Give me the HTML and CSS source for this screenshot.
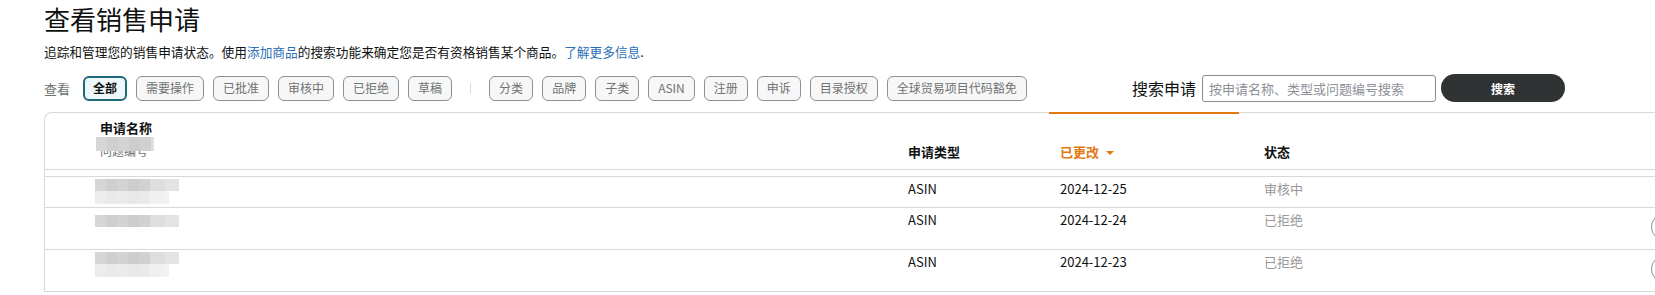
FILE: index.html
```html
<!DOCTYPE html>
<html lang="zh-CN">
<head>
  <meta charset="UTF-8" />
  <meta name="viewport" content="width=device-width, initial-scale=1.0"/>
  <title>查看销售申请</title>
  <link rel="stylesheet" href="styles.css">
</head>
<body>

  <div class="page">
    <h1 class="page-title">查看销售申请</h1>
    <p class="intro">追踪和管理您的销售申请状态。使用<a href="#">添加商品</a>的搜索功能来确定您是否有资格销售某个商品。<a href="#">了解更多信息</a>.</p>

    <div class="toolbar">
      <div class="filters">
        <span class="filter-label">查看</span>
        <button class="chip active">全部</button>
        <button class="chip">需要操作</button>
        <button class="chip">已批准</button>
        <button class="chip">审核中</button>
        <button class="chip">已拒绝</button>
        <button class="chip">草稿</button>
        <span class="divider"></span>
        <button class="chip">分类</button>
        <button class="chip">品牌</button>
        <button class="chip">子类</button>
        <button class="chip">ASIN</button>
        <button class="chip">注册</button>
        <button class="chip">申诉</button>
        <button class="chip">目录授权</button>
        <button class="chip">全球贸易项目代码豁免</button>
      </div>

      <form class="search">
        <label for="q">搜索申请</label>
        <input type="text" id="q" placeholder="按申请名称、类型或问题编号搜索">
        <button type="submit" class="search-btn">搜索</button>
      </form>
    </div>

    <div class="card">
      <table class="requests">
        <colgroup>
          <col class="w-name">
          <col class="w-type">
          <col class="w-date">
          <col class="w-status">
          <col class="w-action">
        </colgroup>
        <thead>
          <tr>
            <th class="col-name">
              <div class="th-title">申请名称</div>
              <div class="th-sub">问题编号<span class="blur blur-head"></span></div>
            </th>
            <th>申请类型</th>
            <th class="sorted">已更改<span class="caret"></span></th>
            <th class="col-status">状态</th>
            <th></th>
          </tr>
          <tr class="spacer"><td colspan="5"></td></tr>
        </thead>
        <tbody>
          <tr>
            <td class="col-name"><div class="blur blur-dark"></div><div class="blur blur-light"></div></td>
            <td>ASIN</td>
            <td>2024-12-25</td>
            <td class="col-status status">审核中</td>
            <td class="col-action"></td>
          </tr>
          <tr>
            <td class="col-name"><div class="blur blur-dark shift"></div></td>
            <td>ASIN</td>
            <td>2024-12-24</td>
            <td class="col-status status">已拒绝</td>
            <td class="col-action"><button class="row-btn" aria-label="操作"></button></td>
          </tr>
          <tr>
            <td class="col-name"><div class="blur blur-dark"></div><div class="blur blur-light"></div></td>
            <td>ASIN</td>
            <td>2024-12-23</td>
            <td class="col-status status">已拒绝</td>
            <td class="col-action"><button class="row-btn" aria-label="操作"></button></td>
          </tr>
        </tbody>
      </table>
    </div>
  </div>

</body>
</html>
```

FILE: styles.css
```css
body {
  margin: 0;
  padding: 0;
  font-family: 'Noto Sans CJK SC', 'Noto Sans', sans-serif;
  color: #0f1111;
  background: white;
  overflow: hidden;
}

.page {
  padding-left: 44px;
}

.page-title {
  margin: 0;
  font-size: 26px;
  font-weight: 400;
  line-height: 38px;
}

.intro {
  margin: 4px 0 0;
  font-size: 12.7px;
  line-height: 20px;
}

.intro a {
  color: #2b6fb6;
  text-decoration: none;
}

.toolbar {
  display: flex;
  align-items: center;
  margin-top: 12px;
  padding-right: 90px;
  height: 28px;
}

.filters {
  display: flex;
  align-items: center;
  gap: 9px;
}

.filter-label {
  font-size: 13px;
  color: #6f7373;
  margin-right: 4px;
}

.chip {
  height: 25px;
  padding: 0 9px;
  border: 1px solid #8d9096;
  border-radius: 6px;
  background: #f7f7f7;
  color: #6f7373;
  font-family: inherit;
  font-size: 12px;
  line-height: 1;
  cursor: pointer;
  white-space: nowrap;
}

.chip.active {
  border: 2px solid #1f6a7a;
  padding: 0 8px;
  background: #eef8fa;
  color: #0f1111;
  font-weight: 700;
}

.divider {
  width: 1px;
  height: 11px;
  background: #d5d9d9;
  margin: 0 9px;
}

.search {
  margin-left: auto;
  display: flex;
  align-items: center;
  gap: 5px;
}

.search label {
  font-size: 16px;
  margin-right: 1px;
}

.search input {
  width: 234px;
  height: 27px;
  box-sizing: border-box;
  padding: 0 6px;
  border: 1px solid #888c8c;
  border-radius: 3px;
  font-family: inherit;
  font-size: 13px;
}

.search input::placeholder {
  color: #8d9096;
}

.search-btn {
  width: 124px;
  height: 28px;
  border: none;
  border-radius: 14px;
  background: #303333;
  color: white;
  font-family: inherit;
  font-size: 12px;
  font-weight: 700;
  cursor: pointer;
}

.card {
  margin-top: 10px;
  width: 1660px;
  border-top: 1px solid #d5d9d9;
  border-left: 1px solid #d5d9d9;
  border-top-left-radius: 8px;
}

.requests {
  border-collapse: collapse;
  table-layout: fixed;
  width: 1660px;
  font-size: 13px;
}

.w-name { width: 852px; }
.w-type { width: 152px; }
.w-date { width: 190px; }
.w-status { width: 401px; }
.w-action { width: 65px; }

.requests th {
  text-align: left;
  font-weight: 700;
  vertical-align: bottom;
  padding: 0 11px 8px;
  line-height: 18px;
  border-bottom: 1px solid #d5d9d9;
}

.requests td {
  text-align: left;
  vertical-align: top;
  padding: 3px 11px 9px;
  line-height: 18px;
  border-bottom: 1px solid #d5d9d9;
}

.requests th.col-name {
  padding-left: 55px;
  padding-top: 6px;
  padding-bottom: 9px;
}

.requests td.col-name {
  padding-left: 50px;
  padding-top: 2px;
  padding-bottom: 0;
}

.requests .col-status {
  padding-left: 25px;
}

.requests .col-action {
  padding-top: 5px;
  padding-bottom: 6px;
}

.sorted {
  color: #e47911;
  box-shadow: 0 -1px 0 #e47911, inset 0 1px 0 #e47911;
}

.caret {
  display: inline-block;
  margin-left: 7px;
  border-left: 4px solid transparent;
  border-right: 4px solid transparent;
  border-top: 4px solid #e47911;
  vertical-align: middle;
}

.th-sub {
  position: relative;
  margin-top: 5px;
  font-size: 12px;
  font-weight: 400;
  color: #6f7373;
}

.blur-head {
  position: absolute;
  left: -4px;
  top: -5px;
  width: 58px;
  height: 14px;
}

.spacer td {
  height: 6px;
  padding: 0;
}

.status {
  color: #999;
}

.blur {
  display: block;
  background: linear-gradient(to right,
    #d6d6d6 0 11px, #cfcfcf 11px 22px, #d3d3d3 22px 33px,
    #cdcdcd 33px 44px, #d1d1d1 44px 55px, #dedede 55px 70px, #e3e3e3 70px);
}

.blur-dark {
  width: 84px;
  height: 12px;
}

.blur-light {
  width: 74px;
  height: 13px;
  opacity: 0.45;
}

.blur-dark.shift {
  margin-top: 5px;
}

.row-btn {
  width: 80px;
  height: 28px;
  border: 1px solid #8d9096;
  border-radius: 14px;
  background: white;
}
```
